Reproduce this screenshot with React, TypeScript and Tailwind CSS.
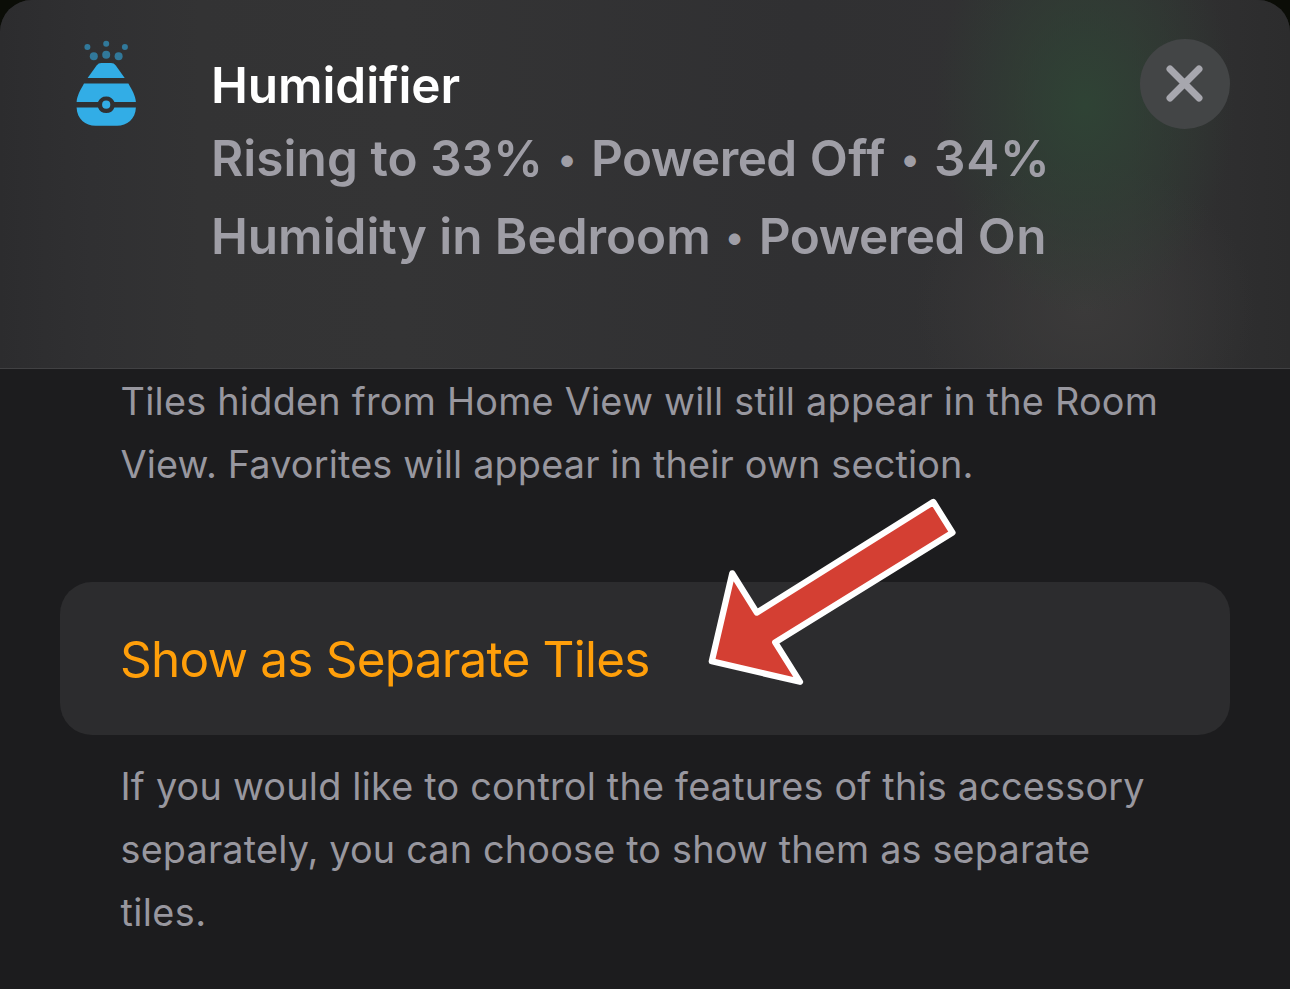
function HumidifierIcon() {
  return (
    <svg width="62" height="88" viewBox="75 39 62 88" className="block">
      <g fill="#32ade6" opacity="0.58">
        <circle cx="87.4" cy="47" r="3" />
        <circle cx="106.2" cy="43.8" r="3" />
        <circle cx="124.9" cy="47" r="3" />
        <circle cx="93.8" cy="56.2" r="4" />
        <circle cx="106.2" cy="54.8" r="4" />
        <circle cx="118.6" cy="56.2" r="4" />
      </g>
      <g fill="#32ade6">
        <path d="M87.6 78 L96.6 65.4 Q98.4 63 101.4 63 H111 Q114 63 115.8 65.4 L124.7 78 Z" />
        <path d="M84 83.6 H128.4 C132 90 135.6 96 135.9 102 H114.4 A8.8 8.8 0 0 0 98 102 H76.6 C76.9 96 80.4 90 84 83.6 Z" />
        <path d="M76.6 107.5 H98 A8.8 8.8 0 0 0 114.4 107.5 H135.9 C135.6 119 127 125.7 117 125.7 H95.5 C85.5 125.7 76.9 119 76.6 107.5 Z" />
        <circle cx="106.2" cy="104.7" r="4.1" />
      </g>
    </svg>
  );
}

function Bullet() {
  return (
    <span className="inline-block w-[48px] whitespace-pre text-center align-[4px] text-[37px] leading-none">
      {" • "}
    </span>
  );
}

function Arrow() {
  return (
    <svg
      width="260"
      height="200"
      viewBox="700 490 260 200"
      className="absolute left-[700px] top-[490px]"
    >
      <path
        d="M933.3 502 L952.5 532.6 L775.2 642.3 L800 681.8 L711.8 661.3 L732.3 573.3 L756.8 612.6 Z"
        fill="#d43f33"
        stroke="#fff"
        strokeWidth="6.2"
        strokeLinejoin="round"
      />
    </svg>
  );
}

export default function App() {
  return (
    <div className="relative h-[989px] w-[1290px] overflow-hidden bg-[#0b0d07] font-['Inter',sans-serif]">
      <main className="h-full overflow-hidden rounded-t-[32px] bg-[#1c1c1e]">
        <header className="flex h-[369px] items-start border-b border-[#414143] bg-[radial-gradient(ellipse_150px_210px_at_1085px_105px,#2f4335_0%,#2f433500_100%),radial-gradient(ellipse_170px_150px_at_1085px_310px,#3b3a3a_0%,#3b3a3a00_100%),linear-gradient(90deg,#2c2c2e_0px,#303032_90px,#333334_200px,#343435_400px,#303032_800px,#323233_1130px,#2c2c2d_1290px)] pl-[75px] pr-[60px]">
          <div className="mt-[39px] w-[136px] shrink-0">
            <HumidifierIcon />
          </div>
          <div className="mt-[51px] flex-1 whitespace-nowrap text-[49.5px] font-semibold">
            <h1 className="leading-[68px] tracking-[-0.1px] text-white">Humidifier</h1>
            <p className="leading-[78px] text-[#9f9ea6]">
              <span className="tracking-[0.05px]">Rising to 33%</span>
              <Bullet />
              <span className="tracking-[-0.6px]">Powered</span>
              <span className="tracking-[0.6px]"> Off</span>
              <Bullet />
              <span className="tracking-[0.8px]">34%</span>
              <br />
              <span className="tracking-[-0.05px]">Humidity in Bedroom</span>
              <Bullet />
              <span className="tracking-[-0.5px]">Powered</span>
              <span className="tracking-[0.4px]"> On</span>
            </p>
          </div>
          <button
            aria-label="Close"
            className="mt-[39px] flex size-[90px] shrink-0 items-center justify-center rounded-full bg-[#434546]"
          >
            <svg width="40" height="40" viewBox="0 0 40 40">
              <path d="M5 5 L34 34 M34 5 L5 34" stroke="#a7a7ae" strokeWidth="7" strokeLinecap="round" />
            </svg>
          </button>
        </header>
        <section className="px-[60px] pt-px">
          <p className="whitespace-nowrap pl-[60.5px] text-[37.8px] leading-[63px] text-[#98979f]">
            <span className="tracking-[0.24px]">Tiles hidden from Home View will still appear in the Room</span>
            <br />
            <span className="tracking-[0.17px]">View. Favorites will appear in their own section.</span>
          </p>
          <button className="mt-[86px] flex h-[153px] w-full items-center rounded-[32px] bg-[#2c2c2e] pl-[60px] pt-[2px] text-[49.5px] text-[#ff9f0a]">
            <span className="tracking-[-0.8px]">Show as Separate Tiles</span>
          </button>
          <p className="mt-[20px] whitespace-nowrap pl-[60.5px] text-[37.8px] leading-[63px] text-[#98979f]">
            <span className="tracking-[0.21px]">If you would like to control the features of this accessory</span>
            <br />
            <span className="tracking-[0.18px]">separately, you can choose to show them as separate</span>
            <br />
            <span className="tracking-[0.4px]">tiles.</span>
          </p>
        </section>
      </main>
      <Arrow />
    </div>
  );
}
